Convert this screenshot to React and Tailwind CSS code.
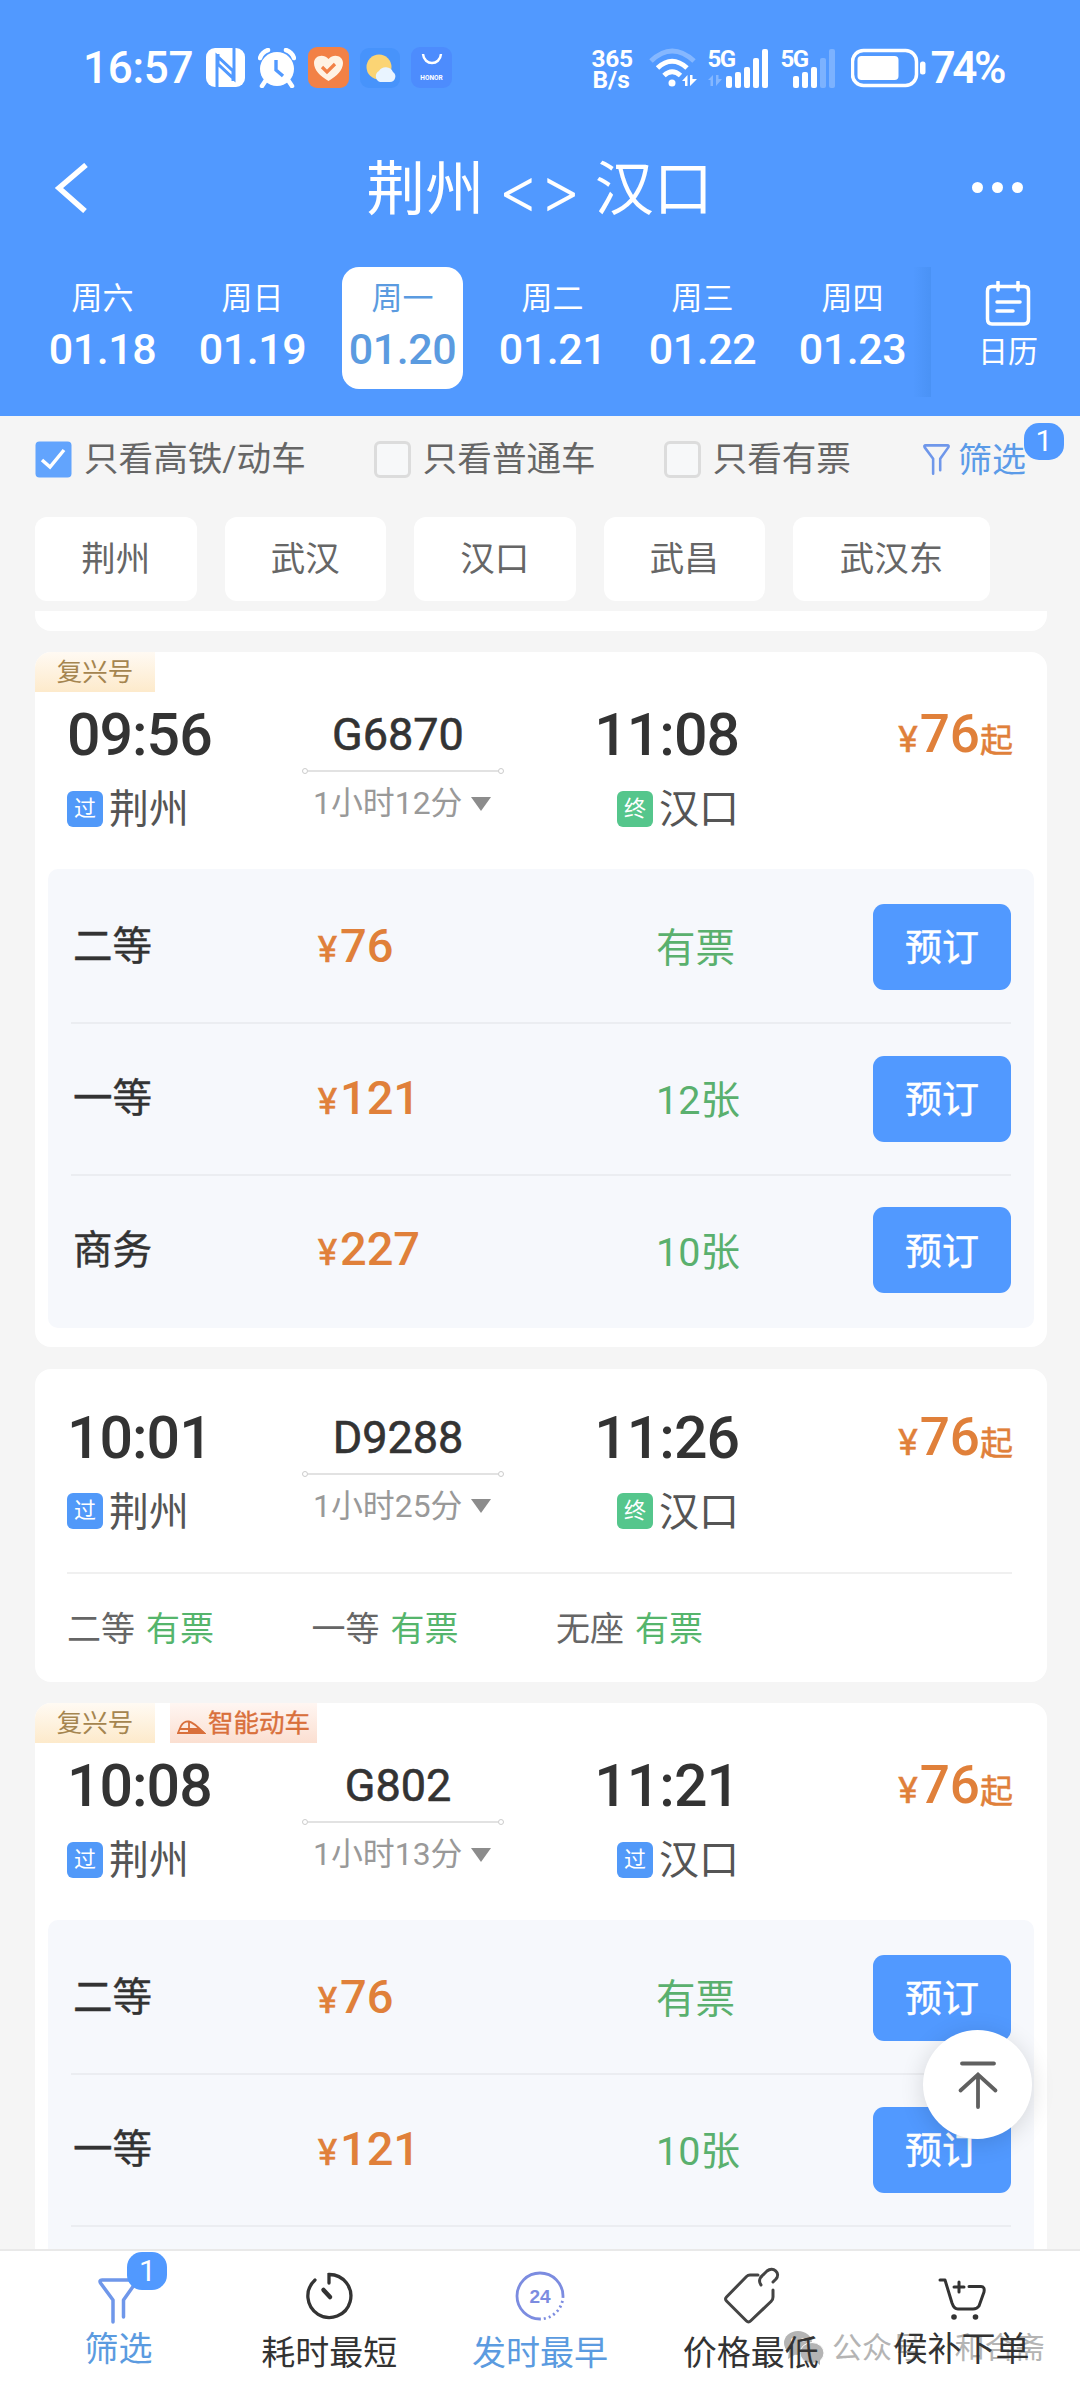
import React from "react";

const days = [
  { week: "周六", date: "01.18" },
  { week: "周日", date: "01.19" },
  { week: "周一", date: "01.20", active: true },
  { week: "周二", date: "01.21" },
  { week: "周三", date: "01.22" },
  { week: "周四", date: "01.23" },
];

const stations = ["荆州", "武汉", "汉口", "武昌", "武汉东"];

const trains = [
  {
    no: "G6870",
    start: "09:56",
    end: "11:08",
    duration: "1小时12分",
    endType: "终",
    tags: ["复兴号"],
    seats: [
      { name: "二等", price: "76", left: "有票" },
      { name: "一等", price: "121", left: "12张" },
      { name: "商务", price: "227", left: "10张" },
    ],
  },
  {
    no: "D9288",
    start: "10:01",
    end: "11:26",
    duration: "1小时25分",
    endType: "终",
    tags: [],
    summary: ["二等", "一等", "无座"],
  },
  {
    no: "G802",
    start: "10:08",
    end: "11:21",
    duration: "1小时13分",
    endType: "过",
    tags: ["复兴号", "智能动车"],
    seats: [
      { name: "二等", price: "76", left: "有票" },
      { name: "一等", price: "121", left: "10张" },
      { name: "商务", price: "227", left: "10张" },
    ],
  },
];

const StatusBar = () => (
  <div className="flex h-[135px] items-center justify-between pl-[83px] pr-[77px] text-white">
    <div className="flex items-center">
      <span className="w-[123px] text-[44px] leading-none font-medium tracking-[-0.3px]">
        16:57
      </span>
      {/* NFC */}
      <svg width="39" height="39" viewBox="0 0 39 39">
        <rect width="39" height="39" rx="9" fill="#fff" />
        <path
          d="M11 39V8L27 23V33M28 0V31L12 16V6"
          fill="none"
          stroke="#5199ff"
          strokeWidth="3"
        />
      </svg>
      {/* Alarm */}
      <svg className="ml-[13px]" width="38" height="40" viewBox="0 0 38 40">
        <path
          d="M2 10Q4 4 10 2M28 2Q34 4 36 10M8 32L4 38M30 32L34 38"
          stroke="#fff"
          strokeWidth="4.5"
          strokeLinecap="round"
          fill="none"
        />
        <circle cx="19" cy="21" r="17" fill="#fff" />
        <path d="M18 12V22L25 28" stroke="#5199ff" strokeWidth="3.4" fill="none" />
      </svg>
      {/* Health */}
      <svg className="ml-[12px]" width="41" height="41" viewBox="0 0 41 41">
        <rect width="41" height="41" rx="9" fill="#f28146" />
        <path
          d="M20.500 34C12 29 6 23 6 16C6 9 15 6 20.500 12C26 6 35 9 35 16C35 23 29 29 20.500 34Z"
          fill="#fff3e4"
        />
        <path d="M14 20L19 25L27 17" stroke="#f28146" strokeWidth="3.2" fill="none" />
      </svg>
      {/* Weather */}
      <svg className="ml-[11px]" width="40" height="40" viewBox="0 0 40 40">
        <rect width="40" height="40" rx="9" fill="#4793fb" />
        <circle cx="19" cy="19" r="12.500" fill="#fbd474" />
        <path
          d="M20 34A6 6 0 0 1 19 23A8 8 0 0 1 33 24A5.500 5.500 0 0 1 30 34Z"
          fill="#e9f4ff"
        />
      </svg>
      {/* App store */}
      <div className="ml-[11px] flex h-[41px] w-[41px] flex-col items-center rounded-[9px] bg-[#4d8cfd]">
        <svg width="22" height="20" viewBox="0 0 22 20">
          <path d="M2 7C3 19 19 19 20 7" stroke="#fff" strokeWidth="2.500" fill="none" />
        </svg>
        <span className="mt-[8px] text-[6.5px] leading-none font-bold">HONOR</span>
      </div>
    </div>
    <div className="flex items-center">
      <div className="w-[58px] pt-[2px] text-[24.500px] leading-[21px] font-bold">
        <div className="tracking-[-0.3px]">365</div>
        <div className="pl-[1px]">B/s</div>
      </div>
      {/* Wifi */}
      <svg width="50" height="40" viewBox="0 0 50 40" fill="none" stroke="#fff" strokeWidth="5">
        <path d="M2 13Q23 -7 45 13" opacity=".3" />
        <path d="M8.500 20Q23 6.500 38 20" />
        <path d="M15 27.500Q23 20 31.500 27.500" />
        <circle cx="23" cy="35" r="3.500" fill="#fff" stroke="none" />
        <path d="M33 33L38.500 27V38H36V33ZM41 27V38L48 31H43.500V27Z" fill="#fff" stroke="none" />
      </svg>
      {/* Signals */}
      <div className="relative ml-[8px] h-[40px] w-[63px]">
        <span className="absolute top-[-1px] left-0 text-[24px] leading-none font-bold tracking-[-1.500px]">
          5G
        </span>
        <svg width="63" height="40" viewBox="0 0 63 40" fill="#fff">
          <path d="M1 32L6 27V38H3.500V32ZM9 27V38L15 31H11.500V27Z" opacity=".3" />
          <rect x="19" y="28" width="6" height="12" rx="2" />
          <rect x="28" y="24" width="6" height="16" rx="2" />
          <rect x="37" y="19" width="6" height="21" rx="2" />
          <rect x="46" y="10" width="6" height="30" rx="2" />
          <rect x="55" y="1" width="6" height="39" rx="2" />
        </svg>
      </div>
      <div className="relative ml-[10px] h-[40px] w-[57px]">
        <span className="absolute top-[-1px] left-0 text-[24px] leading-none font-bold tracking-[-1.500px]">
          5G
        </span>
        <svg width="57" height="40" viewBox="0 0 57 40" fill="#fff">
          <rect x="13" y="28" width="6" height="12" rx="2" />
          <rect x="22" y="24" width="6" height="16" rx="2" />
          <rect x="31" y="19" width="6" height="21" rx="2" />
          <rect x="40" y="10" width="6" height="30" rx="2" opacity=".25" />
          <rect x="49" y="1" width="6" height="39" rx="2" opacity=".25" />
        </svg>
      </div>
      {/* Battery */}
      <svg className="ml-[14px]" width="76" height="40" viewBox="0 0 76 40">
        <rect x="1.500" y="2.500" width="64" height="35" rx="11" fill="none" stroke="#fff" strokeWidth="3.500" />
        <rect x="6.500" y="8" width="41" height="24" rx="4" fill="#fff" />
        <rect x="69" y="13.500" width="5.500" height="13" rx="2.500" fill="#fff" />
      </svg>
      <span className="ml-[3px] text-[44px] leading-none font-semibold tracking-[-3.4px]">74%</span>
    </div>
  </div>
);

const TitleBar = () => (
  <div className="flex h-[105px] items-center justify-between pr-[57px] pl-[54px] text-white">
    <svg width="36" height="50" viewBox="0 0 36 50">
      <path d="M32 2L5 25L31 48" stroke="#fff" strokeWidth="5.500" fill="none" />
    </svg>
    <h1 className="flex items-center pt-[3px] pl-[17px] text-[59px] leading-none">
      <span>荆州</span>
      <span className="mx-[14px] font-[Inter] text-[63px] font-light">&lt;&gt;</span>
      <span>汉口</span>
    </h1>
    <div className="flex gap-[9px]">
      <i className="h-[11px] w-[11px] rounded-full bg-white" />
      <i className="h-[11px] w-[11px] rounded-full bg-white" />
      <i className="h-[11px] w-[11px] rounded-full bg-white" />
    </div>
  </div>
);

const DateBar = () => (
  <div className="flex pt-[27px] pl-[42px] text-white">
    <div className="flex gap-[29px]">
      {days.map((day) => (
        <div
          key={day.date}
          className={
            day.active
              ? "flex h-[122px] w-[121px] flex-col items-center rounded-[17px] bg-white pt-[16px] text-[#5b9be0]"
              : "flex h-[122px] w-[121px] flex-col items-center pt-[16px]"
          }
        >
          <span className="text-[31px] leading-none">{day.week}</span>
          <span className="mt-[14px] text-[43px] leading-none font-medium tracking-[-0.4px]">
            {day.date}
          </span>
        </div>
      ))}
    </div>
    <div className="h-[130px] w-[18px] bg-linear-to-r from-[#5199ff] to-[#4a92f5]" />
    <div className="ml-[44px] flex w-[66px] flex-col items-center pt-[14px]">
      <svg width="46" height="46" viewBox="0 0 46 46" fill="none" stroke="#fff" strokeWidth="3.500">
        <path d="M9 5.500H7Q2.500 5.500 2.500 10V38Q2.500 43 7 43H39Q43.500 43 43.500 38V10Q43.500 5.500 39 5.500H7" />
        <path d="M13 1V9M33 1V9M12 21H35M12 30H28" strokeLinecap="round" />
      </svg>
      <span className="mt-[10px] text-[30px] leading-none">日历</span>
    </div>
  </div>
);

const Check = ({ label, checked }) => (
  <div className="flex items-center">
    {checked ? (
      <svg width="37" height="37" viewBox="0 0 37 37">
        <rect x="0.500" y="0.500" width="36" height="36" rx="4" fill="#62a4fd" />
        <path d="M7 19L15 26L29 9" stroke="#fff" strokeWidth="3.500" fill="none" />
      </svg>
    ) : (
      <span className="h-[37px] w-[37px] rounded-[6px] border-[3px] border-[#dcdcdc] bg-[#f7f8f9]" />
    )}
    <span className="ml-[12px] text-[34.600px] leading-none text-[#666]">{label}</span>
  </div>
);

const Funnel = ({ width, height, stroke }) => (
  <svg
    width={width}
    height={height}
    viewBox="0 0 40 46"
    fill="none"
    stroke="#6f97ea"
    strokeWidth={stroke}
    strokeLinecap="round"
    strokeLinejoin="round"
  >
    <path d="M15 44V22L2.500 5Q1 2 4 2H36Q39 2 37.500 5L25.500 22V39" />
  </svg>
);

const FilterBar = () => (
  <div className="flex h-[87px] items-center pl-[35px]">
    <Check label="只看高铁/动车" checked />
    <div className="ml-[68px]">
      <Check label="只看普通车" />
    </div>
    <div className="ml-[68px]">
      <Check label="只看有票" />
    </div>
    <div className="relative ml-[72px] flex items-center">
      <Funnel width="27" height="31" stroke="3.800" />
      <span className="ml-[8px] text-[34px] leading-none text-[#5b9be8]">筛选</span>
      <span className="absolute -top-[20px] left-[101px] flex h-[37px] w-[40px] items-center justify-center rounded-[15px] bg-[#5199ff] text-[30px] leading-none text-white">
        1
      </span>
    </div>
  </div>
);

const Stamp = ({ type }) => (
  <span
    className={
      type === "终"
        ? "flex h-[36px] w-[36px] items-center justify-center rounded-[6px] bg-[#55c68c] text-[22px] leading-none text-white"
        : "flex h-[36px] w-[36px] items-center justify-center rounded-[6px] bg-[#5199f9] text-[22px] leading-none text-white"
    }
  >
    {type}
  </span>
);

const Tags = ({ tags }) => (
  <div className="flex h-[40px] gap-[15px] text-[25.500px]">
    {tags.map((tag) =>
      tag === "复兴号" ? (
        <span
          key={tag}
          className="flex w-[120px] items-center justify-center rounded-tl-[14px] bg-linear-to-b from-[#fffaf3] to-[#fdeacb] pt-[2px] leading-none text-[#a5854f]"
        >
          {tag}
        </span>
      ) : (
        <span
          key={tag}
          className="flex w-[147px] items-center bg-linear-to-b from-[#fff6f2] to-[#fbdfd1] pt-[2px] pl-[7px] leading-none text-[#d9703c] [-webkit-text-stroke:0.4px_#d9703c]"
        >
          <svg className="mt-[6px] mr-[2px] shrink-0" width="29" height="15" viewBox="0 0 29 15" fill="none" stroke="#d9703c" strokeWidth="1.800">
            <path d="M1 13L4 6Q7 1 12 1.500Q16 2 27 13ZM3 9H12M12 2V13" />
            <path d="M12 9H22L27 13H12Z" fill="#d9703c" />
          </svg>
          {tag}
        </span>
      )
    )}
  </div>
);

const TrainCard = ({ train }) => (
  <div className="overflow-hidden rounded-[16px] bg-white">
    {train.tags.length > 0 ? <Tags tags={train.tags} /> : <div className="h-[26px]" />}
    {/* Train Info */}
    <div className="grid h-[177px] grid-cols-[235px_202px_235px_274px] pt-[13px] pl-[32px]">
      <div>
        <p className="text-[59px] leading-none font-medium tracking-[-1px] text-[#333]">
          {train.start}
        </p>
        <div className="mt-[23px] flex items-center">
          <Stamp type="过" />
          <span className="mt-[3px] ml-[6px] text-[40px] leading-none text-[#555]">荆州</span>
        </div>
      </div>
      <div>
        <p className="mt-[7px] pr-[10px] text-center text-[45px] leading-none text-[#333] [-webkit-text-stroke:0.6px_#333]">
          {train.no}
        </p>
        <div className="mt-[11px] flex items-center">
          <i className="h-[6px] w-[6px] rounded-full border border-[#ccc]" />
          <i className="h-[2px] flex-1 bg-[#e2e2e2]" />
          <i className="h-[6px] w-[6px] rounded-full border border-[#ccc]" />
        </div>
        <div className="mt-[14px] flex items-center pl-[11px] text-[#999]">
          <span className="text-[31.900px] leading-none">{train.duration}</span>
          <svg className="ml-[9px]" width="20" height="14" viewBox="0 0 20 14">
            <path d="M0 0H20L10 14Z" fill="#8c8c8c" />
          </svg>
        </div>
      </div>
      <div className="flex flex-col items-end">
        <p className="text-[59px] leading-none font-medium tracking-[-1px] text-[#333]">
          {train.end}
        </p>
        <div className="mt-[23px] flex items-center">
          <Stamp type={train.endType} />
          <span className="mt-[3px] ml-[6px] text-[40px] leading-none text-[#555]">汉口</span>
        </div>
      </div>
      <p className="mt-[3px] flex items-baseline justify-end leading-none text-[#e0803a]">
        <span className="mr-[2px] text-[37px] [-webkit-text-stroke:0.5px_#e0803a]">¥</span>
        <span className="text-[53px] font-medium">76</span>
        <span className="text-[33px] [-webkit-text-stroke:0.5px_#e0803a]">起</span>
      </p>
    </div>
    {/* Seats */}
    {train.seats ? (
      <div className="mx-[13px] mb-[19px] rounded-[10px] bg-[#f6f8fc] px-[23px] pb-[3px]">
        {train.seats.map((seat, index) => (
          <div
            key={seat.name}
            className={
              index > 0
                ? "flex h-[151.500px] items-center border-t-2 border-[#ebedf1] pl-[2px]"
                : "flex h-[153px] items-center pt-[2px] pl-[2px]"
            }
          >
            <span className="w-[200px] text-[39.500px] leading-none text-[#333] [-webkit-text-stroke:0.4px_#333]">
              {seat.name}
            </span>
            <span className="w-[383px] pb-[3px] pl-[45px] leading-none text-[#e0803a]">
              <span className="mr-[3px] text-[36px] [-webkit-text-stroke:0.7px_#e0803a]">¥</span>
              <span className="text-[47px] font-medium">{seat.price}</span>
            </span>
            <span className="w-[217px] pt-[4px] text-[39.500px] leading-none text-[#5ab06e]">
              {seat.left}
            </span>
            <button className="h-[86px] w-[138px] shrink-0 rounded-[11px] bg-[#5199ff] pt-[4px] text-[37px] leading-none text-white [-webkit-text-stroke:0.5px_#fff]">
              预订
            </button>
          </div>
        ))}
      </div>
    ) : (
      <div className="mr-[35px] ml-[32px] flex h-[110px] items-center border-t-2 border-[#f0f0f0] pt-[3px] text-[34px] leading-none">
        {train.summary.map((name) => (
          <span key={name} className="w-[244.500px] text-[#666]">
            {name}
            <span className="ml-[11px] text-[#55b56c]">有票</span>
          </span>
        ))}
      </div>
    )}
  </div>
);

const BottomNav = () => (
  <div className="absolute bottom-0 left-0 h-[143px] w-full border-t-2 border-[#e9e9e9] bg-white">
    {/* Watermark */}
    <div className="absolute top-[80px] left-[784px] flex items-center text-[#b4b4b4]">
      <svg width="40" height="34" viewBox="0 0 40 34" fill="#b4b4b4">
        <ellipse cx="14" cy="12" rx="14" ry="12" />
        <path d="M5 20L4 28L12 23Z" />
        <ellipse cx="28" cy="22" rx="12" ry="10.500" stroke="#fff" strokeWidth="1" />
        <path d="M31 30L36 34L36 28Z" />
        <circle cx="9" cy="9" r="2" fill="#fff" />
        <circle cx="19" cy="9" r="2" fill="#fff" />
      </svg>
      <span className="ml-[8px] text-[30px] leading-none whitespace-pre [word-spacing:5px]">
        公众号 · 和合斋
      </span>
    </div>
    <div className="relative grid grid-cols-5 px-[13px] text-[34px] leading-none text-[#333]">
      <div className="flex flex-col items-center">
        <div className="relative mt-[27px] h-[46px] w-[40px]">
          <Funnel width="40" height="46" stroke="3.500" />
          <span className="absolute -top-[26px] left-[29px] flex h-[38px] w-[40px] items-center justify-center rounded-[15px] bg-[#5199ff] text-[30px] leading-none text-white">
            1
          </span>
        </div>
        <span className="mt-[8px] text-[#5b9be0]">筛选</span>
      </div>
      <div className="flex flex-col items-center">
        <svg className="mt-[20px]" width="50" height="50" viewBox="0 0 50 50" fill="none" stroke="#333" strokeWidth="3.300" strokeLinecap="round">
          <path d="M11 9A21.500 21.500 0 1 0 25 3.500V12" />
          <path d="M19.500 19L26 26" strokeWidth="4.500" />
        </svg>
        <span className="mt-[15px]">耗时最短</span>
      </div>
      <div className="flex flex-col items-center text-[#5b9be0]">
        <svg className="mt-[20px]" width="50" height="50" viewBox="0 0 50 50" fill="none" stroke="#7c8ce0" strokeWidth="2.800">
          <path d="M25 48A23 23 0 1 1 48 25" />
          <path d="M48 25A23 23 0 0 1 25 48" strokeDasharray="2 3" />
          <text x="25" y="32" textAnchor="middle" className="font-[Liberation_Sans] text-[19px] font-bold" fill="#7c8ce0" stroke="none">
            24
          </text>
        </svg>
        <span className="mt-[15px]">发时最早</span>
      </div>
      <div className="flex flex-col items-center">
        <svg className="mt-[15px]" width="58" height="60" viewBox="0 0 58 60" fill="none" stroke="#444" strokeWidth="3" strokeLinecap="round" strokeLinejoin="round">
          <path d="M36 9H28Q26 9 24.500 10.500L4.500 31Q2.500 33 4.500 35L24.500 55Q26.500 57 28.500 55L49 35.500Q51 34 51 31V24" />
          <path d="M39 19C36 15 38 11 42 8L45 5C51 0 59 7 54 13L51 16" />
        </svg>
        <span className="mt-[10px]">价格最低</span>
      </div>
      <div className="flex flex-col items-center">
        <svg className="mt-[26px]" width="50" height="46" viewBox="0 0 50 46" fill="none" stroke="#333" strokeWidth="3" strokeLinecap="round" strokeLinejoin="round">
          <path d="M3 3H8L15 26Q17 32 21 32H36Q40 32 42 29L47 15Q48 9.500 44 9.500H32M22 5V15M17 10H27" />
          <circle cx="17" cy="40" r="2.800" fill="#333" stroke="none" />
          <circle cx="38.500" cy="40" r="2.800" fill="#333" stroke="none" />
        </svg>
        <span className="mt-[9px]">候补下单</span>
      </div>
    </div>
  </div>
);

const App = () => {
  return (
    <div className="relative h-[2392px] w-[1080px] overflow-hidden bg-[#f5f5f5] font-['Roboto','Noto_Sans_CJK_SC',sans-serif]">
      {/* Header */}
      <div className="h-[416px] bg-[#5199ff]">
        <StatusBar />
        <TitleBar />
        <DateBar />
      </div>

      <FilterBar />

      {/* Stations */}
      <div className="flex gap-[28px] pt-[14px] pl-[35px]">
        {stations.map((name) => (
          <div
            key={name}
            className={
              name.length > 2
                ? "flex h-[84px] w-[197px] items-center justify-center rounded-[12px] bg-white text-[34.500px] leading-none text-[#666]"
                : "flex h-[84px] w-[161.500px] items-center justify-center rounded-[12px] bg-white text-[34.500px] leading-none text-[#666]"
            }
          >
            {name}
          </div>
        ))}
      </div>

      {/* Train List */}
      <div className="mx-[35px] mt-[10px] w-[1012px]">
        <div className="mb-[21px] h-[20px] rounded-b-[16px] bg-white" />
        <div className="flex flex-col gap-[21.500px]">
          {trains.map((train) => (
            <TrainCard key={train.no} train={train} />
          ))}
        </div>
      </div>

      {/* Back To Top */}
      <div className="absolute top-[2030px] left-[923px] flex h-[109px] w-[109px] items-center justify-center rounded-full bg-white shadow-[0_4px_24px_rgba(0,0,0,0.14)]">
        <svg width="42" height="50" viewBox="0 0 42 50" fill="none" stroke="#606060" strokeWidth="3.800" strokeLinecap="round">
          <path d="M5 3.500H37M21 15V47M3.500 30.500L21 14.500L38.500 30.500" />
        </svg>
      </div>

      <BottomNav />
    </div>
  );
};

export default App;
